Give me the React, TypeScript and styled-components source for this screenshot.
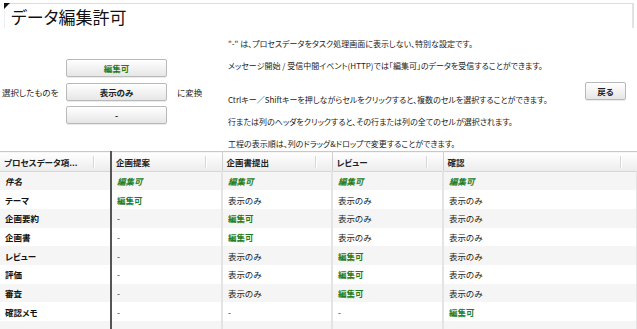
import styled, {createGlobalStyle, css} from 'styled-components'

const GlobalStyle = createGlobalStyle`
  html, body {
    margin: 0;
    padding: 0;
    background: #fff;
  }
  body {
    width: 637px;
    height: 329px;
    overflow: hidden;
    font-family: 'Noto Sans CJK JP', 'Liberation Sans', sans-serif;
    font-feature-settings: 'palt';
    color: #222;
  }
`

const PageStyled = styled.div`
  display: flex;
  flex-direction: column;
  width: 637px;
  height: 329px;
`

const TitleBarStyled = styled.div`
  position: relative;
  margin: 3px 3px 0 4px;
  height: 30px;
  box-sizing: border-box;
  padding: 2px 0 0 6px;
  border-top: 1px solid #dcdcdc;
  border-left: 1px solid #eee;
  border-right: 2px solid #e2e2e2;
  font-size: 17px;
  line-height: 22px;
  color: #111;
  &::before {
    content: '';
    position: absolute;
    left: -1px;
    top: -1px;
    border-top: 6px solid #111;
    border-right: 6px solid transparent;
  }
`

const ControlAreaStyled = styled.div`
  display: flex;
  height: 123px;
  flex-shrink: 0;
  align-items: flex-start;
`

const ConvertGroupStyled = styled.div`
  display: flex;
  align-items: center;
  width: 228px;
  padding: 31px 0 0 2px;
  box-sizing: border-box;
  font-size: 8.5px;
`

const ConvertLabel = styled.span<{$gap: number}>`
  width: ${p => p.$gap}px;
  white-space: nowrap;
`

const ButtonStackStyled = styled.div`
  display: flex;
  flex-direction: column;
  gap: 5.5px;
  width: 111px;
`

const GrayButton = styled.button<{$green?: boolean; $width: number}>`
  width: ${p => p.$width}px;
  height: 18px;
  padding: 0;
  border: 1px solid #b9b9b9;
  border-radius: 2px;
  background: linear-gradient(to bottom, #ffffff, #e6e6e6);
  font-family: inherit;
  font-feature-settings: 'palt';
  font-size: 8.5px;
  font-weight: bold;
  color: ${p => (p.$green ? '#1f7d1f' : '#222')};
  box-shadow: 0 1px 0 rgba(0, 0, 0, 0.08);
`

const NotesStyled = styled.div`
  flex: 1;
  display: flex;
  flex-direction: column;
  padding-top: 5px;
  font-size: 8px;
  line-height: 22px;
`

const NoteGap = styled.div`
  height: 12px;
`

const BackColumnStyled = styled.div`
  width: 52px;
  padding-top: 54px;
  display: flex;
  justify-content: flex-start;
`

const TableStyled = styled.table`
  width: 637px;
  border-collapse: collapse;
  table-layout: fixed;
  border-top: 1px solid #c8c8c8;
  font-size: 8.5px;
`

const HeadCell = styled.th<{$first?: boolean}>`
  height: 19px;
  padding: 0 0 0 4px;
  text-align: left;
  font-weight: bold;
  background: linear-gradient(to bottom, #ffffff, #ececec);
  border-right: ${p => (p.$first ? '2px solid #555' : '1px solid #d0d0d0')};
  border-bottom: 1px solid #d6d6d6;
`

const HeadInner = styled.div`
  display: flex;
  align-items: center;
  justify-content: space-between;
  white-space: nowrap;
`

const HeadGrip = styled.span`
  width: 1px;
  height: 12px;
  margin-right: 15px;
  background: #d8d8d8;
  border-right: 1px solid #fff;
`

const Row = styled.tr<{$odd: boolean}>`
  height: 18.7px;
  background: ${p => (p.$odd ? '#f5f5f5' : '#fff')};
`

const Cell = styled.td<{$first?: boolean; $kind?: 'edit' | 'view' | 'none'; $italic?: boolean}>`
  padding: 0 0 0 5px;
  white-space: nowrap;
  overflow: hidden;
  border-right: ${p => (p.$first ? '2px solid #555' : '2px solid #e4e4e4')};
  ${p =>
    p.$first &&
    css`
      font-weight: bold;
      color: #111;
    `}
  ${p =>
    p.$kind === 'edit' &&
    css`
      font-weight: bold;
      color: #1f7d1f;
    `}
  ${p =>
    p.$italic &&
    css`
      font-style: italic;
      font-weight: bold;
    `}
`

const columns = ['プロセスデータ項...', '企画提案', '企画書提出', 'レビュー', '確認']
const widths = [111, 111, 110, 111, 194]

type Perm = '編集可' | '表示のみ' | '-'

const rows: {name: string; perms: Perm[]; italic?: boolean}[] = [
  {name: '件名', perms: ['編集可', '編集可', '編集可', '編集可'], italic: true},
  {name: 'テーマ', perms: ['編集可', '表示のみ', '表示のみ', '表示のみ']},
  {name: '企画要約', perms: ['-', '編集可', '表示のみ', '表示のみ']},
  {name: '企画書', perms: ['-', '編集可', '表示のみ', '表示のみ']},
  {name: 'レビュー', perms: ['-', '表示のみ', '編集可', '表示のみ']},
  {name: '評価', perms: ['-', '表示のみ', '編集可', '表示のみ']},
  {name: '審査', perms: ['-', '表示のみ', '編集可', '表示のみ']},
  {name: '確認メモ', perms: ['-', '-', '-', '編集可']},
]

const kindOf = (p: Perm) => (p === '編集可' ? 'edit' : p === '表示のみ' ? 'view' : 'none')

const App: React.FC = () => {
  return (
    <PageStyled>
      <GlobalStyle />
      <TitleBarStyled>データ編集許可</TitleBarStyled>
      <ControlAreaStyled>
        <ConvertGroupStyled>
          <ConvertLabel $gap={64}>選択したものを</ConvertLabel>
          <ButtonStackStyled>
            <GrayButton $width={101} $green>
              編集可
            </GrayButton>
            <GrayButton $width={101}>表示のみ</GrayButton>
            <GrayButton $width={101}>-</GrayButton>
          </ButtonStackStyled>
          <ConvertLabel $gap={40}>に変換</ConvertLabel>
        </ConvertGroupStyled>
        <NotesStyled>
          <span>"-" は、プロセスデータをタスク処理画面に表示しない、特別な設定です。</span>
          <span>メッセージ開始 / 受信中間イベント(HTTP)では「編集可」のデータを受信することができます。</span>
          <NoteGap />
          <span>Ctrlキー／Shiftキーを押しながらセルをクリックすると、複数のセルを選択することができます。</span>
          <span>行または列のヘッダをクリックすると、その行または列の全てのセルが選択されます。</span>
          <span>工程の表示順は、列のドラッグ&ドロップで変更することができます。</span>
        </NotesStyled>
        <BackColumnStyled>
          <GrayButton $width={41}>戻る</GrayButton>
        </BackColumnStyled>
      </ControlAreaStyled>
      <TableStyled>
        <colgroup>
          {widths.map((w, i) => (
            <col key={i} style={{width: w}} />
          ))}
        </colgroup>
        <thead>
          <tr>
            {columns.map((c, i) => (
              <HeadCell key={c} $first={i === 0}>
                <HeadInner>
                  <span>{c}</span>
                  <HeadGrip />
                </HeadInner>
              </HeadCell>
            ))}
          </tr>
        </thead>
        <tbody>
          {rows.map((r, ri) => (
            <Row key={r.name} $odd={ri % 2 === 0}>
              <Cell $first $italic={r.italic}>
                {r.name}
              </Cell>
              {r.perms.map((p, pi) => (
                <Cell key={pi} $kind={kindOf(p)} $italic={r.italic}>
                  {p}
                </Cell>
              ))}
            </Row>
          ))}
          <Row $odd>
            <Cell $first />
            <Cell />
            <Cell />
            <Cell />
            <Cell />
          </Row>
        </tbody>
      </TableStyled>
    </PageStyled>
  )
}

export default App
